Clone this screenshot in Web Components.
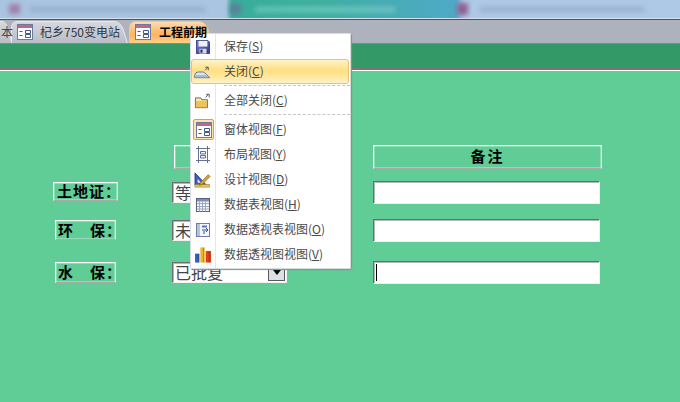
<!DOCTYPE html>
<html lang="zh">
<head>
<meta charset="utf-8">
<title>工程前期</title>
<style>
  html, body { margin: 0; padding: 0; width: 680px; height: 402px; overflow: hidden; background: #60cc96; }
  body { font-family: "Noto Sans CJK SC", "Liberation Sans", sans-serif; }
</style>
</head>
<body>
<access-window>
  <title-strip></title-strip>
  <tab-bar>
    <doc-tab cut>本</doc-tab>
    <doc-tab>杞乡750变电站</doc-tab>
    <doc-tab active>工程前期</doc-tab>
  </tab-bar>
  <record-bar></record-bar>
  <form-canvas>
    <form-label style="grid-column:2;margin-left:2px"></form-label>
    <form-label style="grid-column:3;width:229px" head>备注</form-label>

    <form-label style="margin-top:1px;height:19px" left>土地证：</form-label>
    <form-field style="margin-top:1px">等</form-field>
    <form-field wide></form-field>

    <form-label style="margin:1px 0 0 2px;width:61px;height:20px" spread><span>环</span><span style="margin-right:-9px">保：</span></form-label>
    <form-field style="margin-top:1px">未</form-field>
    <form-field wide></form-field>

    <form-label style="margin:1px 0 0 2px;width:61px;height:21px" spread><span>水</span><span style="margin-right:-9px">保：</span></form-label>
    <form-field style="margin-top:1px" combo>已批复</form-field>
    <form-field wide caret></form-field>
  </form-canvas>
  <context-menu>
    <menu-row label="保存" key="S" icon="save"></menu-row>
    <menu-row label="关闭" key="C" icon="close" hot></menu-row>
    <menu-rule></menu-rule>
    <menu-row label="全部关闭" key="C" icon="closeall"></menu-row>
    <menu-rule></menu-rule>
    <menu-row label="窗体视图" key="F" icon="form" checked></menu-row>
    <menu-row label="布局视图" key="Y" icon="layout"></menu-row>
    <menu-row label="设计视图" key="D" icon="design"></menu-row>
    <menu-row label="数据表视图" key="H" icon="sheet"></menu-row>
    <menu-row label="数据透视表视图" key="O" icon="pivot"></menu-row>
    <menu-row label="数据透视图视图" key="V" icon="chart"></menu-row>
  </context-menu>
</access-window>

<script>
(function(){

  const formIcon = `<svg width="16" height="16" viewBox="0 0 16 16">
    <rect x=".5" y=".5" width="15" height="15" fill="#fbfcff" stroke="#6c7a9c"/>
    <rect x="1" y="1" width="14" height="3" fill="#c4648f"/>
    <path d="M2.500 7.500h3M2.500 11.500h3M8.500 6.500h5v3h-5zM8.500 10.500h5v3h-5z" fill="none" stroke="#44597f"/>
  </svg>`;

  const icons = {
    save: `<svg width="14" height="14" viewBox="0 0 16 16">
      <defs><linearGradient id="sv" x1="0" y1="0" x2="1" y2="1"><stop offset="0" stop-color="#7d86d8"/><stop offset="1" stop-color="#2f3690"/></linearGradient></defs>
      <path d="M.5 .5h13l2 2v13H.5z" fill="url(#sv)" stroke="#2c3178"/>
      <rect x="3" y="1" width="10" height="6.500" fill="#eef1fb"/>
      <rect x="4" y="10" width="8" height="5.500" fill="#d7d9e3"/>
      <rect x="5" y="11" width="2.500" height="3.500" fill="#30345c"/>
    </svg>`,
    close: `<svg width="18" height="14" viewBox="0 0 20 16">
      <path d="M.5 14.500v-3q1-3.500 4-3.500h6q3.500 2 7 6.500z" fill="#dbe6f4" stroke="#52688e"/>
      <path d="M1 11.500h13l2.500 2.500H1z" fill="#a6bbd8"/>
      <path d="M12.500 6l3-3.500M12.500 2.500H16V6" fill="none" stroke="#3e4a5d"/>
    </svg>`,
    closeall: `<svg width="18" height="16" viewBox="0 0 20 18">
      <path d="M1.500 5.500h6l1 2h6.500v9H1.500z" fill="#fbe7a8" stroke="#6f6036"/>
      <path d="M2 9h12.500v7H2z" fill="#f0c257"/>
      <path d="M13 5l3-3.500M13.500 1.500H17V5" fill="none" stroke="#3e4a5d"/>
    </svg>`,
    form: formIcon,
    layout: `<svg width="14" height="17" viewBox="0 0 14 17">
      <path d="M2.500 0v17M11.500 0v17M0 2.500h14M0 14.500h14" stroke="#607396" fill="none"/>
      <path d="M4.500 5.500h5v2.500h-5zM4.500 9.500h5v2.500h-5z" fill="#eef1f7" stroke="#607396"/>
    </svg>`,
    design: `<svg width="18" height="16" viewBox="0 0 20 18">
      <path d="M1 1v14h13z" fill="#3f5fc0" stroke="#27397f"/>
      <path d="M4 8v4h4z" fill="#e6ecfa"/>
      <rect x="1" y="14" width="16.500" height="3" fill="#e9c65b" stroke="#8a7330" stroke-width=".6"/>
      <path d="M7 12l9-9 2 2-9 9-3 1z" fill="#d9a32c" stroke="#7a5a18" stroke-width=".7"/>
    </svg>`,
    sheet: `<svg width="14" height="14" viewBox="0 0 14 14">
      <rect x=".5" y=".5" width="13" height="13" fill="#f4f6fa" stroke="#55637f"/>
      <rect x="1" y="1" width="12" height="2.500" fill="#7f8fae"/>
      <path d="M3.500 3.500v10M6.500 3.500v10M9.500 3.500v10M1 5.500h12M1 8.500h12M1 11h12" stroke="#9ca8c0" fill="none"/>
    </svg>`,
    pivot: `<svg width="14" height="14" viewBox="1 1 14 14">
      <rect x="1.500" y="1.500" width="13" height="13" fill="#f4f6fb" stroke="#6c7ea4"/>
      <rect x="2" y="2" width="3" height="12" fill="#b4c3de"/>
      <path d="M7 8h5M11 6l2 2-2 2M9 12V9" stroke="#2e4f95" fill="none"/>
      <rect x="7" y="3.500" width="5" height="2" fill="#5c78b2"/>
    </svg>`,
    chart: `<svg width="16" height="16" viewBox="0 0 18 17">
      <rect x="0" y="7" width="5" height="10" fill="#3066c4"/>
      <rect x="6" y="0" width="5" height="17" fill="#efb52a"/>
      <rect x="12" y="4" width="6" height="13" fill="#e0401c"/>
      <path d="M3.500 7v10M9.500 0v17M16 4v13" stroke="#00000044"/>
    </svg>`
  };

  function shadow(el, html) {
    el.attachShadow({ mode: "open" }).innerHTML = html;
  }

  customElements.define("access-window", class extends HTMLElement {
    constructor() {
      super();
      shadow(this, `<style>
        :host { display: flex; flex-direction: column; position: relative; width: 680px; height: 402px; overflow: hidden; }
      </style><slot></slot>`);
    }
  });

  // blurred desktop taskbar above the window
  customElements.define("title-strip", class extends HTMLElement {
    constructor() {
      super();
      shadow(this, `<style>
        :host { display: block; height: 20px; flex: none; overflow: hidden; box-sizing: border-box;
          border-bottom: 1px solid #47555f; box-shadow: inset 0 -1px 0 #d5e3ee;
          background: linear-gradient(90deg, #a9c5e2 0, #a9c5e2 226px, #38ad9a 232px, #3eb0a0 320px, #4fa9c8 456px, #aec9e6 464px, #aec9e6 680px); }
        .blur { display: flex; align-items: center; height: 18px; filter: blur(2.5px); }
        .ic { width: 11px; height: 10px; background: #a07fa8; flex: none; }
        .tx { height: 5px; background: #7f93b0; opacity: .45; flex: none; }
      </style>
      <div class="blur">
        <div class="ic" style="margin-left:9px"></div>
        <div class="tx" style="width:175px;margin-left:10px"></div>
        <div class="ic" style="margin-left:25px;background:#5d7f9a"></div>
        <div class="tx" style="width:140px;margin-left:14px;background:#a5e4da"></div>
        <div class="ic" style="margin-left:62px;background:#8f5f90;height:12px"></div>
        <div class="tx" style="width:165px;margin-left:12px"></div>
      </div>`);
    }
  });

  customElements.define("tab-bar", class extends HTMLElement {
    constructor() {
      super();
      shadow(this, `<style>
        :host { display: flex; align-items: flex-end; flex: none; height: 23px;
          background: #adb2bd; border-bottom: 1px solid #84888f; overflow: hidden; }
      </style><slot></slot>`);
    }
  });

  customElements.define("doc-tab", class extends HTMLElement {
    constructor() {
      super();
      const cut = this.hasAttribute("cut");
      const active = this.hasAttribute("active");
      const w = cut ? 11 : active ? 84 : 117;
      // slanted right edge, rounded left corner, like the Office 2007 tab
      const d = cut
        ? "M-2 22.500V.5H2Q6 .5 8 8L12 22.500"
        : `M.5 22.500V7Q.5 .5 7 .5H${w-14}Q${w-8} .5 ${w-5} 8L${w-.5} 22.500`;
      shadow(this, `<style>
        :host { display: flex; align-items: center; flex: none; position: relative; box-sizing: border-box; height: 22px;
          width: ${w}px; margin-right: ${cut ? 0 : 1}px; padding-left: 6px; gap: 7px; padding-bottom: 1px;
          font-size: 12px; color: #33363d; white-space: nowrap; }
        :host([cut]) { padding: 0 0 1px 1px; color: #44474d; }
        :host([active]) { font-weight: 700; color: #000; gap: 8px; }
        svg.shape { position: absolute; left: 0; top: 0; z-index: 0; overflow: visible; }
        .in { position: relative; z-index: 1; display: flex; align-items: center; gap: inherit; }
      </style>
      <svg class="shape" width="${w}" height="22">
        <defs><linearGradient id="g" x1="0" y1="0" x2="0" y2="1">
          ${active
            ? '<stop offset="0" stop-color="#fbdcb4"/><stop offset=".6" stop-color="#ffb45c"/><stop offset="1" stop-color="#ffd08e"/>'
            : '<stop offset="0" stop-color="#d5d8de"/><stop offset="1" stop-color="#b8bcc6"/>'}
        </linearGradient></defs>
        <path d="${d}" fill="url(#g)" stroke="${active ? '#e8c79a' : '#e6e8ec'}"/>
      </svg>
      <span class="in">${cut ? "" : formIcon}<slot></slot></span>`);
    }
  });

  customElements.define("record-bar", class extends HTMLElement {
    constructor() {
      super();
      shadow(this, `<style>
        :host { display: block; flex: none; height: 24px; background: #339966; border-bottom: 2px solid #777; }
      </style>`);
    }
  });

  // the Access form: label column, value column, remark column
  customElements.define("form-canvas", class extends HTMLElement {
    constructor() {
      super();
      shadow(this, `<style>
        :host { display: block; flex: 1; background: #60cc96; border-top: 1px solid #fff; }
        .grid { display: grid; padding: 74px 0 0 53px; grid-template-columns: 119px 201px 229px;
          grid-template-rows: 36px 38px 42px 24px; align-items: start; }
      </style><div class="grid"><slot></slot></div>`);
    }
  });

  customElements.define("form-label", class extends HTMLElement {
    constructor() {
      super();
      shadow(this, `<style>
        :host { display: flex; align-items: center; justify-content: center; box-sizing: border-box;
          width: 65px; height: 24px; border: 1px solid #fff; border-right-color: #e4e4e4; border-bottom-color: #a9a9a9;
          box-shadow: inset 0 0 0 .5px #ffffff99; padding-bottom: 2px;
          font-size: 15px; line-height: 17px; font-weight: 700; color: #000; letter-spacing: 1px; white-space: nowrap; }
        :host([left]) { justify-content: flex-start; padding-left: 3px; }
        :host([spread]) { justify-content: space-between; padding: 0 2px 2px 2px; }
        :host([head]) { letter-spacing: 2px; padding-bottom: 3px; }
      </style><slot></slot>`);
    }
  });

  customElements.define("form-field", class extends HTMLElement {
    constructor() {
      super();
      shadow(this, `<style>
        :host { display: flex; align-items: center; box-sizing: border-box; width: 115px; height: 21px;
          background: #fff; border: 1px solid; border-color: #6e6e6e #f0f0f0 #f0f0f0 #6e6e6e;
          box-shadow: inset 1px 1px 0 #b5b5b5;
          font-size: 16px; line-height: 18px; color: #444; padding-left: 2px; white-space: nowrap; overflow: hidden; }
        :host([wide]) { width: 227px; height: 23px; }
        .txt { padding-bottom: 2px; }
        .btn { display: none; margin-left: auto; width: 17px; height: 17px; flex: none; box-sizing: border-box; margin-right: 1px;
          background: #dcdfe3; border: 1px solid #55585c; align-items: center; justify-content: center; }
        :host([combo]) .btn { display: flex; }
        .btn i { border: 4px solid transparent; border-top: 5px solid #000; border-bottom: 0; }
        .caret { display: none; width: 1px; height: 17px; background: #000; }
        :host([caret]) .caret { display: block; }
      </style><span class="caret"></span><span class="txt"><slot></slot></span><span class="btn"><i></i></span>`);
    }
  });

  customElements.define("context-menu", class extends HTMLElement {
    constructor() {
      super();
      shadow(this, `<style>
        :host { position: absolute; left: 190px; top: 33px; width: 161px; height: 236px; box-sizing: border-box;
          padding: 1px; background: linear-gradient(90deg, #fff 25px, #e4e6e8 25px, #e4e6e8 26px, #fff 26px);
          border-radius: 2px; box-shadow: 1px 1px 1px #8a8f94, 0 0 0 1px #d9dde0 inset; font-size: 12px; color: #4a4a4a;
          display: flex; flex-direction: column; }
      </style><slot></slot>`);
    }
  });

  customElements.define("menu-row", class extends HTMLElement {
    constructor() {
      super();
      const label = this.getAttribute("label");
      const key = this.getAttribute("key");
      const icon = icons[this.getAttribute("icon")];
      shadow(this, `<style>
        :host { display: flex; align-items: center; height: 25px; flex: none; box-sizing: border-box; white-space: nowrap; }
        :host([hot]) { border: 1px solid #e7c36b; border-radius: 3px; margin-right: 1px;
          background: linear-gradient(#fff3c9, #ffdf83 45%, #ffe9a8 80%, #fff3cc); }
        .ic { width: 24px; height: 24px; display: flex; align-items: center; justify-content: center; flex: none; margin-right: 9px; box-sizing: border-box; }
        :host([hot]) .ic { margin-left: -1px; }
        :host([checked]) .ic { width: 21px; height: 21px; margin: 0 10px 0 2px; background: #ffe3b0; border: 1px solid #f29536; border-radius: 2px; }
        .t { padding-bottom: 2px; }
        u { text-decoration-thickness: 1px; text-underline-offset: 1px; }
      </style><span class="ic">${icon}</span><span class="t">${label}(<u>${key}</u>)</span>`);
    }
  });

  customElements.define("menu-rule", class extends HTMLElement {
    constructor() {
      super();
      shadow(this, `<style>
        :host { display: block; height: 3px; flex: none; margin: 1px 0 0 33px; box-sizing: border-box;
          border-top: 1px dashed #c5c5c5; }
      </style>`);
    }
  });

})();
</script>
</body>
</html>
